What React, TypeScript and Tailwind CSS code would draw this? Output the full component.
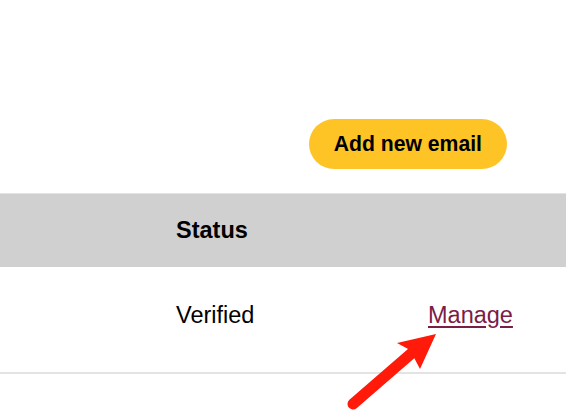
import React from "react";

const App: React.FC = () => {
  return (
    <div className="relative w-[566px] h-[414px] overflow-hidden bg-white font-['Liberation_Sans',Arial,sans-serif] text-black">
      {/* Toolbar */}
      <div className="flex justify-end pt-[119px] pr-[59px]">
        <button className="h-[50px] px-[25px] rounded-full bg-[#fec425] text-[21.2px] font-bold leading-none">
          Add new email
        </button>
      </div>

      {/* Table */}
      <div className="mt-[24px]">
        <div className="grid grid-cols-[176px_252px_1fr] h-[74px] items-center bg-[#d0d0d0] border-t border-[#e2e2e2]">
          <div />
          <div className="text-[23.5px] font-bold leading-none">Status</div>
          <div />
        </div>
        <div className="grid grid-cols-[176px_252px_1fr] h-[107px] items-center border-b-2 border-[#e3e3e3]">
          <div />
          <div className="text-[23.5px] leading-none pb-[8px]">Verified</div>
          <div className="leading-none pb-[8px]">
            <a href="#" className="text-[23.5px] text-[#7b1d46] underline underline-offset-[3px]">
              Manage
            </a>
          </div>
        </div>
      </div>

      {/* Annotation arrow */}
      <svg className="absolute left-0 top-0 pointer-events-none" width="566" height="414" viewBox="0 0 566 414">
        <line x1="353" y1="404" x2="413" y2="352" stroke="#ff1a0a" strokeWidth="11" strokeLinecap="round" />
        <polygon points="436,334 397,343 410,350 420,369" fill="#ff1a0a" />
      </svg>
    </div>
  );
};

export default App;
